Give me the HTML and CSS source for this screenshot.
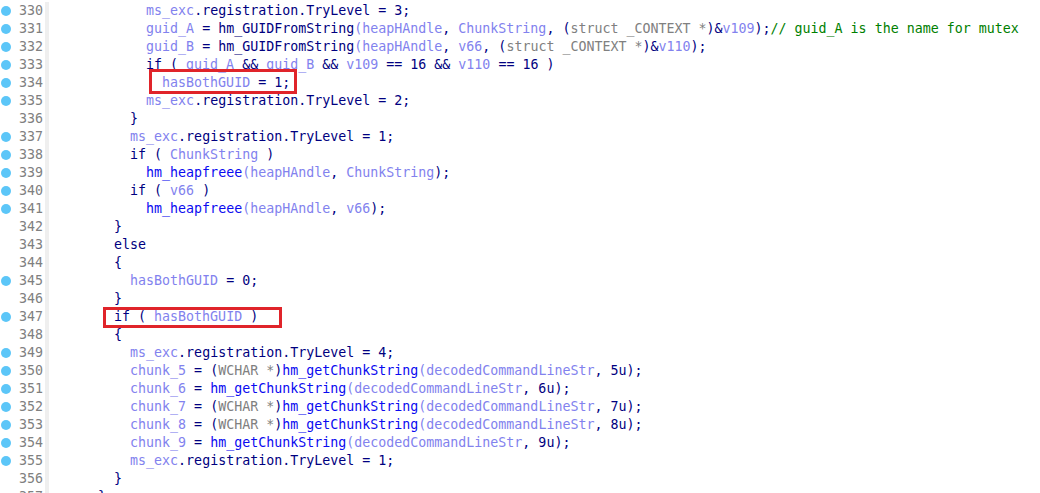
FILE: index.html
```html
<!DOCTYPE html>
<html>
<head>
<meta charset="utf-8">
<link rel="stylesheet" href="styles.css">
</head>
<body>
<div class="editor">
  <div class="line"><div class="gutter"><span class="dot"></span><span class="num">330</span></div><div class="strip"></div><div class="code">            <span class="v">ms_exc</span>.registration.TryLevel = 3;</div></div>
  <div class="line"><div class="gutter"><span class="dot"></span><span class="num">331</span></div><div class="strip"></div><div class="code">            <span class="v">guid_A</span> = hm_GUIDFromString<span class="v">(heapHAndle</span>, <span class="v">ChunkString</span>, (<span class="t">struct _CONTEXT *</span>)&amp;<span class="v">v109</span>);<span class="c">// guid_A is the name for mutex</span></div></div>
  <div class="line"><div class="gutter"><span class="dot"></span><span class="num">332</span></div><div class="strip"></div><div class="code">            <span class="v">guid_B</span> = hm_GUIDFromString<span class="v">(heapHAndle</span>, <span class="v">v66</span>, (<span class="t">struct _CONTEXT *</span>)&amp;<span class="v">v110</span>);</div></div>
  <div class="line"><div class="gutter"><span class="dot"></span><span class="num">333</span></div><div class="strip"></div><div class="code">            if ( <span class="v">guid_A</span> &amp;&amp; <span class="v">guid_B</span> &amp;&amp; <span class="v">v109</span> == 16 &amp;&amp; <span class="v">v110</span> == 16 )</div></div>
  <div class="line"><div class="gutter"><span class="dot"></span><span class="num">334</span></div><div class="strip"></div><div class="code">              <span class="v">hasBothGUID</span> = 1;</div></div>
  <div class="line"><div class="gutter"><span class="dot"></span><span class="num">335</span></div><div class="strip"></div><div class="code">            <span class="v">ms_exc</span>.registration.TryLevel = 2;</div></div>
  <div class="line"><div class="gutter"><span class="nodot"></span><span class="num">336</span></div><div class="strip"></div><div class="code">          }</div></div>
  <div class="line"><div class="gutter"><span class="dot"></span><span class="num">337</span></div><div class="strip"></div><div class="code">          <span class="v">ms_exc</span>.registration.TryLevel = 1;</div></div>
  <div class="line"><div class="gutter"><span class="dot"></span><span class="num">338</span></div><div class="strip"></div><div class="code">          if ( <span class="v">ChunkString</span> )</div></div>
  <div class="line"><div class="gutter"><span class="dot"></span><span class="num">339</span></div><div class="strip"></div><div class="code">            <span class="f">hm_heapfreee</span><span class="v">(heapHAndle</span>, <span class="v">ChunkString</span>);</div></div>
  <div class="line"><div class="gutter"><span class="dot"></span><span class="num">340</span></div><div class="strip"></div><div class="code">          if ( <span class="v">v66</span> )</div></div>
  <div class="line"><div class="gutter"><span class="dot"></span><span class="num">341</span></div><div class="strip"></div><div class="code">            <span class="f">hm_heapfreee</span><span class="v">(heapHAndle</span>, <span class="v">v66</span>);</div></div>
  <div class="line"><div class="gutter"><span class="nodot"></span><span class="num">342</span></div><div class="strip"></div><div class="code">        }</div></div>
  <div class="line"><div class="gutter"><span class="nodot"></span><span class="num">343</span></div><div class="strip"></div><div class="code">        else</div></div>
  <div class="line"><div class="gutter"><span class="nodot"></span><span class="num">344</span></div><div class="strip"></div><div class="code">        {</div></div>
  <div class="line"><div class="gutter"><span class="dot"></span><span class="num">345</span></div><div class="strip"></div><div class="code">          <span class="v">hasBothGUID</span> = 0;</div></div>
  <div class="line"><div class="gutter"><span class="nodot"></span><span class="num">346</span></div><div class="strip"></div><div class="code">        }</div></div>
  <div class="line"><div class="gutter"><span class="dot"></span><span class="num">347</span></div><div class="strip"></div><div class="code">        if ( <span class="v">hasBothGUID</span> )</div></div>
  <div class="line"><div class="gutter"><span class="nodot"></span><span class="num">348</span></div><div class="strip"></div><div class="code">        {</div></div>
  <div class="line"><div class="gutter"><span class="dot"></span><span class="num">349</span></div><div class="strip"></div><div class="code">          <span class="v">ms_exc</span>.registration.TryLevel = 4;</div></div>
  <div class="line"><div class="gutter"><span class="dot"></span><span class="num">350</span></div><div class="strip"></div><div class="code">          <span class="v">chunk_5</span> = (<span class="t">WCHAR *</span>)<span class="f">hm_getChunkString</span><span class="v">(decodedCommandLineStr</span>, 5u);</div></div>
  <div class="line"><div class="gutter"><span class="dot"></span><span class="num">351</span></div><div class="strip"></div><div class="code">          <span class="v">chunk_6</span> = <span class="f">hm_getChunkString</span><span class="v">(decodedCommandLineStr</span>, 6u);</div></div>
  <div class="line"><div class="gutter"><span class="dot"></span><span class="num">352</span></div><div class="strip"></div><div class="code">          <span class="v">chunk_7</span> = (<span class="t">WCHAR *</span>)<span class="f">hm_getChunkString</span><span class="v">(decodedCommandLineStr</span>, 7u);</div></div>
  <div class="line"><div class="gutter"><span class="dot"></span><span class="num">353</span></div><div class="strip"></div><div class="code">          <span class="v">chunk_8</span> = (<span class="t">WCHAR *</span>)<span class="f">hm_getChunkString</span><span class="v">(decodedCommandLineStr</span>, 8u);</div></div>
  <div class="line"><div class="gutter"><span class="dot"></span><span class="num">354</span></div><div class="strip"></div><div class="code">          <span class="v">chunk_9</span> = <span class="f">hm_getChunkString</span><span class="v">(decodedCommandLineStr</span>, 9u);</div></div>
  <div class="line"><div class="gutter"><span class="dot"></span><span class="num">355</span></div><div class="strip"></div><div class="code">          <span class="v">ms_exc</span>.registration.TryLevel = 1;</div></div>
  <div class="line"><div class="gutter"><span class="nodot"></span><span class="num">356</span></div><div class="strip"></div><div class="code">        }</div></div>
  <div class="line"><div class="gutter"><span class="nodot"></span><span class="num">357</span></div><div class="strip"></div><div class="code">      }</div></div>
  <div class="mark mark-a"></div>
  <div class="mark mark-b"></div>
</div>
</body>
</html>
```

FILE: styles.css
```css
html, body {
  margin: 0;
  padding: 0;
  background: #ffffff;
  overflow: hidden;
}

.editor {
  position: relative;
  width: 1040px;
  height: 493px;
  overflow: hidden;
  padding-top: 2px;
  box-sizing: border-box;
  font-family: "DejaVu Sans Mono", "Liberation Mono", monospace;
  font-size: 13.3px;
  color: #000080;
}

.line {
  display: flex;
  height: 18px;
  line-height: 18px;
}

.gutter {
  width: 45px;
  display: flex;
  align-items: center;
  justify-content: space-between;
  padding-left: 1px;
  padding-right: 2px;
  box-sizing: border-box;
}

.dot, .nodot {
  width: 10px;
  height: 10px;
  border-radius: 50%;
  flex: none;
}

.dot {
  background: #5cc6f8;
}

.num {
  color: #808080;
}

.strip {
  width: 4px;
  background: #efefef;
  flex: none;
}

.code {
  padding-left: 1px;
  white-space: pre;
}

.v { color: #8282ee; }
.f { color: #0a0af0; }
.t { color: #808080; }
.c { color: #008000; }

.mark {
  position: absolute;
  border: 3px solid #e0242a;
  box-sizing: border-box;
}

.mark-a {
  left: 149px;
  top: 69px;
  width: 148px;
  height: 25px;
}

.mark-b {
  left: 103px;
  top: 307px;
  width: 179px;
  height: 21px;
}
```
